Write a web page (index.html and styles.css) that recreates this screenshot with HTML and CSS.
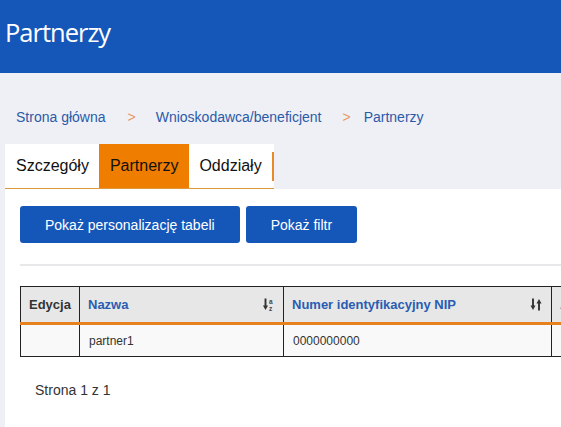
FILE: index.html
```html
<!DOCTYPE html>
<html lang="pl">
<head>
<meta charset="utf-8">
<title>Partnerzy</title>
<link rel="stylesheet" href="styles.css">
</head>
<body>
<header class="topbar">
  <h1 class="title">Partnerzy</h1>
</header>
<nav class="breadcrumb">
  <a class="crumb" href="#">Strona główna</a>
  <span class="sep">&gt;</span>
  <a class="crumb" href="#">Wnioskodawca/beneficjent</a>
  <span class="sep sep-last">&gt;</span>
  <span class="crumb">Partnerzy</span>
</nav>
<div class="tabs">
  <div class="tab">Szczegóły</div>
  <div class="tab tab-active">Partnerzy</div>
  <div class="tab tab-last">Oddziały<span class="tab-divider"></span></div>
</div>
<section class="panel">
  <div class="actions">
    <button class="btn">Pokaż personalizację tabeli</button>
    <button class="btn">Pokaż filtr</button>
  </div>
  <div class="separator"></div>
  <div class="table-wrap">
    <table class="grid">
      <thead>
        <tr>
          <th class="col-edit">Edycja</th>
          <th class="col-name"><div class="th-inner"><span class="th-link">Nazwa</span>
            <svg class="sort-icon" width="11" height="13" viewBox="0 0 11 13">
              <path d="M2.5 0.5V9" stroke="#333" stroke-width="1.9" fill="none"/>
              <path d="M0 7.5H5L2.5 12Z" fill="#333"/>
              <text x="6" y="5.5" font-size="6.5" font-family="Liberation Sans, sans-serif" fill="#444" font-weight="bold">a</text>
              <text x="6" y="12.5" font-size="6.5" font-family="Liberation Sans, sans-serif" fill="#444" font-weight="bold">z</text>
            </svg></div></th>
          <th class="col-nip"><div class="th-inner"><span class="th-link">Numer identyfikacyjny NIP</span>
            <svg class="sort-icon" width="12" height="13" viewBox="0 0 12 13">
              <path d="M3 0.5V9" stroke="#333" stroke-width="1.9" fill="none"/>
              <path d="M0.5 7.5H5.5L3 12Z" fill="#333"/>
              <path d="M9 12.5V4" stroke="#333" stroke-width="1.9" fill="none"/>
              <path d="M6.5 5.5H11.5L9 1Z" fill="#333"/>
            </svg></div></th>
          <th class="col-more"><span class="th-link">Akcje</span></th>
        </tr>
      </thead>
      <tbody>
        <tr>
          <td></td>
          <td>partner1</td>
          <td>0000000000</td>
          <td><span class="row-mark"></span></td>
        </tr>
      </tbody>
    </table>
  </div>
  <p class="pager">Strona 1 z 1</p>
</section>
</body>
</html>
```
FILE: styles.css
```css
html {
  background: #eff0f5;
}
body {
  margin: 0;
  overflow: hidden;
  font-family: "Liberation Sans", Arial, sans-serif;
  color: #333;
  background: #eff0f5;
}
.topbar {
  background: #1557b9;
  height: 73px;
  box-sizing: border-box;
  padding: 14px 0 0 5px;
}
.title {
  margin: 0;
  font-family: "Open Sans", sans-serif;
  font-weight: 400;
  font-size: 25.5px;
  line-height: 36px;
  letter-spacing: -1px;
  color: #fff;
}
.breadcrumb {
  display: flex;
  align-items: center;
  padding: 34px 0 0 16px;
  height: 20px;
  font-size: 14px;
  line-height: 20px;
}
.crumb {
  color: #2b5aa8;
  text-decoration: none;
}
.sep {
  color: #e79a63;
  margin: 0 20px 0 22px;
}
.sep-last {
  margin: 0 13px 0 21px;
}
.tabs {
  display: inline-flex;
  margin: 17px 0 0 5px;
  border-bottom: 1px solid #dc9a3a;
}
.tab {
  display: flex;
  align-items: center;
  height: 44px;
  padding: 0 10px 0 11px;
  background: #fff;
  color: #111;
  font-size: 16px;
}
.tab-active {
  background: #ef7d00;
  padding: 0 11px 0 11px;
}
.tab-last {
  padding: 0 0 0 10px;
}
.tab-divider {
  width: 2px;
  height: 29px;
  margin-left: 10px;
  background: #e88a2a;
}
.panel {
  background: #fff;
  margin-left: 5px;
  padding: 17px 0 40px 15px;
}
.actions {
  display: flex;
  gap: 6px;
}
.btn {
  height: 37px;
  padding: 0 25px;
  border: none;
  border-radius: 3px;
  background: #1557b9;
  color: #fff;
  font-family: "Liberation Sans", Arial, sans-serif;
  font-size: 14px;
}
.separator {
  height: 2px;
  background: #e8e8ea;
  margin-top: 21px;
}
.table-wrap {
  margin-top: 20px;
  overflow: hidden;
}
.grid {
  border-collapse: collapse;
  table-layout: fixed;
  width: 681px;
}
.grid th,
.grid td {
  box-sizing: border-box;
  border: 1px solid #222;
  text-align: left;
  white-space: nowrap;
  overflow: hidden;
}
.grid th {
  height: 37px;
  padding: 0 8px;
  background: #e7e7e7;
  font-size: 13px;
  font-weight: bold;
  color: #333;
  border-bottom: 3px solid #e5821f;
}
.grid td {
  height: 33px;
  padding: 0 9px;
  background: #f9f9f9;
  font-size: 12px;
  color: #333;
}
.col-edit { width: 59px; }
.col-name { width: 204px; }
.col-nip { width: 268px; }
.col-more { width: 150px; }
.th-inner {
  display: flex;
  align-items: center;
  justify-content: space-between;
}
.th-link {
  color: #2a5db2;
}
.sort-icon {
  margin-right: 1px;
}
.row-mark {
  display: inline-block;
  width: 4px;
  height: 2px;
  background: #e88a2a;
}
.pager {
  margin: 23px 0 0 15px;
  font-size: 14px;
  line-height: 20px;
  color: #333;
}
```
